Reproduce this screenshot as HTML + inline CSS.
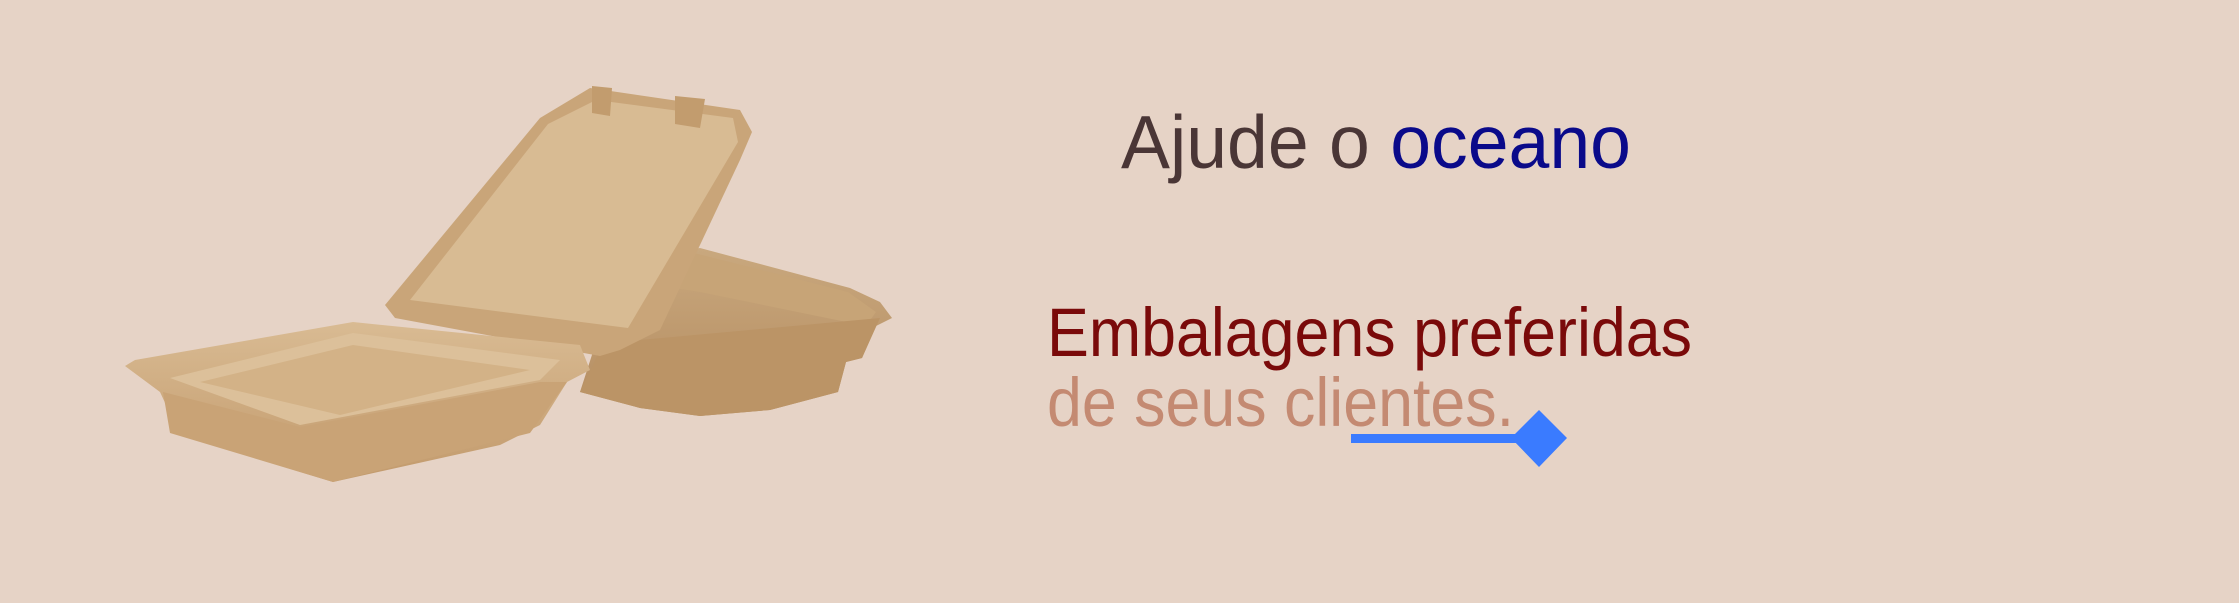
<!DOCTYPE html>
<html><head><meta charset="utf-8"><style>
html,body{margin:0;padding:0;background:#e6d3c6;width:2239px;height:603px;overflow:hidden}
svg{display:block}
</style></head><body>
<svg width="2239" height="603" viewBox="0 0 2239 603" xmlns="http://www.w3.org/2000/svg">
<rect width="2239" height="603" fill="#e6d3c6"/>
<defs>
<linearGradient id="g1" x1="0" y1="0" x2="0" y2="1"><stop offset="0" stop-color="#d9bb93"/><stop offset="1" stop-color="#c29a6c"/></linearGradient>
<linearGradient id="g2" x1="0" y1="0" x2="0" y2="1"><stop offset="0" stop-color="#c9a87e"/><stop offset="1" stop-color="#b48c60"/></linearGradient>
</defs>
<!-- back box -->
<polygon points="655,255 700,248 850,288 880,302 892,318 876,326 862,358 846,362 838,392 770,410 700,416 640,408 580,392 600,330" fill="url(#g2)"/>
<polygon points="690,252 848,292 876,312 866,326 700,292 662,286" fill="#c7a477"/>
<polygon points="640,340 880,318 862,358 846,362 838,392 770,410 700,416 640,408 580,392 600,350" fill="#bb9466"/>
<!-- lid -->
<polygon points="590,88 740,110 752,132 740,160 660,330 620,350 600,356 395,318 385,305 540,118" fill="#c9a579"/>
<polygon points="596,100 733,118 738,142 628,328 410,300 548,124" fill="#d8bb93"/>
<polygon points="592,86 612,88 610,116 592,113" fill="#c29c6e"/>
<polygon points="675,96 705,99 700,128 675,124" fill="#c29c6e"/>
<!-- tray -->
<polygon points="125,366 135,360 353,322 580,345 590,370 567,382 540,425 500,445 333,482 180,435 160,392" fill="url(#g1)"/>
<polygon points="170,378 353,333 560,360 540,380 300,425" fill="#dcc09a"/>
<polygon points="200,382 353,345 530,370 340,415" fill="#d3b287"/>
<polygon points="163,392 300,427 540,382 567,382 530,433 333,482 170,433" fill="#c9a376"/>
<!-- text -->
<text x="1121" y="168" font-family="Liberation Sans, sans-serif" font-size="75" textLength="510" lengthAdjust="spacingAndGlyphs" fill="#4a3636">Ajude o <tspan fill="#0a0a8a">oceano</tspan></text>
<text x="1047" y="356" font-family="Liberation Sans, sans-serif" font-size="69" textLength="645" lengthAdjust="spacingAndGlyphs" fill="#7a0a0a">Embalagens preferidas</text>
<text x="1047" y="426" font-family="Liberation Sans, sans-serif" font-size="69" textLength="467" lengthAdjust="spacingAndGlyphs" fill="#c48a72">de seus clientes.</text>
<rect x="1351" y="434" width="182" height="9" fill="#3a7bff"/>
<polygon points="1539,410 1567,438 1539,467 1511,438" fill="#3a7bff"/>
</svg>
</body></html>
